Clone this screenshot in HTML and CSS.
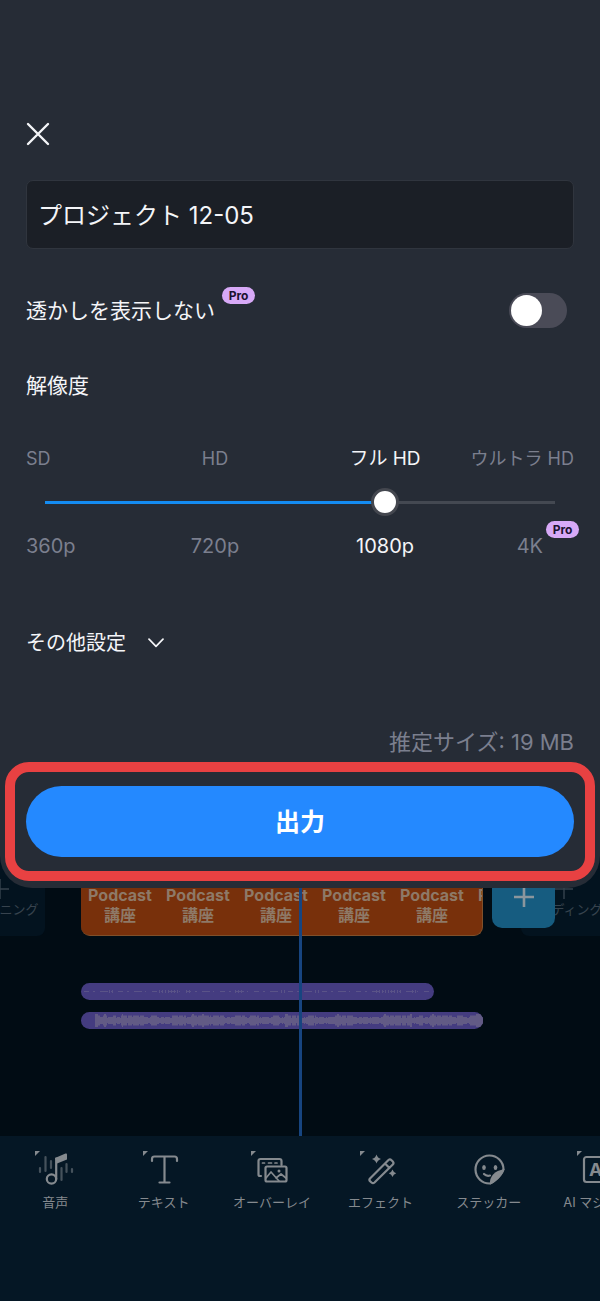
FILE: index.html
```html
<!DOCTYPE html>
<html lang="ja">
<head>
<meta charset="utf-8">
<meta name="viewport" content="width=device-width, initial-scale=1">
<title>プロジェクトの出力</title>
<link rel="stylesheet" href="styles.css">
</head>
<body>
<main class="sheet">
  <button class="close" type="button" aria-label="閉じる">
    <svg width="24" height="24" viewBox="0 0 24 24" fill="none" stroke="#f4f5f8" stroke-width="2.4" stroke-linecap="round"><path d="M2 2 22 22M22 2 2 22"/></svg>
  </button>
  <input class="project-name" type="text" aria-label="プロジェクト名" value="プロジェクト 12-05">

  <div class="option-row">
    <label class="option-label" for="watermark">透かしを表示しない<span class="badge">Pro</span></label>
    <input class="toggle" type="checkbox" role="switch" id="watermark">
  </div>

  <label class="heading" for="resolution">解像度</label>
  <div class="scale scale-names">
    <span>SD</span><span>HD</span><span class="current">フル HD</span><span>ウルトラ HD</span>
  </div>
  <input class="slider" type="range" id="resolution" min="0" max="3" step="1" value="2">
  <div class="scale scale-values">
    <span>360p</span><span>720p</span><span class="current">1080p</span><span class="ultra">4K<span class="badge">Pro</span></span>
  </div>

  <button class="more" type="button">その他設定
    <svg width="16" height="10" viewBox="0 0 16 10" fill="none" stroke="currentColor" stroke-width="1.7" stroke-linecap="round" stroke-linejoin="round"><path d="M1 1.200 8 8.300 15 1.200"/></svg>
  </button>

  <p class="estimate">推定サイズ: 19 MB</p>
  <div class="callout">
    <button class="export" type="button">出力</button>
  </div>
</main>

<section class="timeline">
  <div class="video-row">
    <div class="edge-clip edge-clip-start">
      <svg width="18" height="22" viewBox="0 0 18 22" fill="none" stroke="currentColor" stroke-width="1.4"><path d="M0 11H18M9 1V21"/></svg>
      <span>オープニング</span>
    </div>
    <div class="video-clip">
      <div class="frame">Podcast<br>講座</div>
      <div class="frame">Podcast<br>講座</div>
      <div class="frame">Podcast<br>講座</div>
      <div class="frame">Podcast<br>講座</div>
      <div class="frame">Podcast<br>講座</div>
      <div class="frame">Podcast<br>講座</div>
    </div>
    <button class="add" type="button" aria-label="クリップを追加">
      <svg width="22" height="22" viewBox="0 0 22 22" fill="none" stroke="currentColor" stroke-width="2.600"><path d="M1 11H21M11 1V21"/></svg>
    </button>
    <div class="edge-clip edge-clip-end">
      <svg width="18" height="22" viewBox="0 0 18 22" fill="none" stroke="currentColor" stroke-width="1.400"><path d="M0 11H18M9 1V21"/></svg>
      <span>エンディング</span>
    </div>
  </div>
  <div class="audio-tracks">
    <div class="audio audio-voice">
      <svg viewBox="0 0 353 17" width="353" height="17" fill="none" stroke="#5a5388">
        <path d="M3 8.500H350" stroke-width="1" stroke-dasharray="5 4 2 5 8 3 1 6"/>
        <path d="M28 8.500h6M78 8.500h19M105 8.500h4M154 8.500h7M200 8.500h5M234 8.500h6M295 8.500h25M331 8.500h5" stroke-width="3" stroke-dasharray="1 2"/>
      </svg>
    </div>
    <div class="audio audio-music">
      <svg viewBox="0 0 402 17" width="402" height="17" fill="none" stroke="#625b85">
        <path d="M14 8.500H402" stroke-width="5"/>
        <path d="M14 8.500H402" stroke-width="7" stroke-dasharray="3 1 5 2 1 1 7 2"/>
        <path d="M14 8.500h5M22 8.500h4M32 8.500h3M40 8.500h24M70 8.500h7M91 8.500h14M110 8.500h20M132 8.500h11M154 8.500h10M169 8.500h9M192 8.500h6M204 8.500h16M227 8.500h8M254 8.500h19M302 8.500h29M338 8.500h4M349 8.500h22M376 8.500h7M389 8.500h13" stroke-width="10" stroke-dasharray="6 1 4 1"/>
        <path d="M14 8.500h3M23 8.500h2M41 8.500h1M111 8.500h2M121 8.500h2M204 8.500h3M256 8.500h2M303 8.500h2M329 8.500h2M351 8.500h2M395 8.500h7" stroke-width="13"/>
      </svg>
    </div>
  </div>
  <div class="playhead"></div>
</section>

<nav class="toolbar">
  <button class="tool" type="button">
    <svg class="tool-icon" viewBox="0 0 48 40">
      <path class="solid" d="M4 1h5L4 6z"/>
      <path class="faint" d="M9 18v4M14.500 7v14M20 11v7M30.500 18v12M35.500 14v8M41 19v3"/>
      <circle cx="20.500" cy="29" r="4.700"/><path d="M25.200 29V8.500"/>
      <path class="solid" d="M24 8 34.500 3.500q1.500-.5 1.500 1v5L26 13.500z"/>
    </svg>
    <span>音声</span>
  </button>
  <button class="tool" type="button">
    <svg class="tool-icon" viewBox="0 0 48 40">
      <path class="solid" d="M3 1h5L3 6z"/>
      <path d="M12 11V9q0-2.500 2.500-2.500h20Q37 6.500 37 9v2M24.500 7v25M19.500 32.500h10"/>
    </svg>
    <span>テキスト</span>
  </button>
  <button class="tool" type="button">
    <svg class="tool-icon" viewBox="0 0 48 40">
      <path class="solid" d="M3 1h5L3 6z"/>
      <path d="M13 26h-1q-1.500 0-1.500-1.500V11q0-2 2-2h19q2 0 2 2v4"/>
      <path class="thin" d="M14.500 13h2M20.500 13h3M27 13h2"/>
      <rect x="17.500" y="16.500" width="21" height="15" rx="1.500"/>
      <path class="thin" d="M18 28l5-6 8 9M28 28l5-4 5 4"/><circle class="solid" cx="31" cy="21" r="1.500"/>
    </svg>
    <span>オーバーレイ</span>
  </button>
  <button class="tool" type="button">
    <svg class="tool-icon" viewBox="0 0 48 40">
      <path class="solid" d="M4 1h5L4 6z"/>
      <path d="M14 28.500 32.500 10q1.500-1.300 3 .2l1.300 1.300q1.400 1.500 0 3L18.500 32.500q-1.500 1.300-3 0L14 31.200q-1.200-1.300 0-2.700zM29 13.500l4.500 4.500"/>
      <path class="solid" d="M20.500 4.500q1 3.500 4.500 4.500-3.500 1-4.500 4.500-1-3.500-4.500-4.500 3.500-1 4.500-4.500zM36.500 19.500q.8 2.700 3.700 3.700-2.900 1-3.700 3.700-.8-2.700-3.700-3.700 2.900-1 3.700-3.700z"/>
    </svg>
    <span>エフェクト</span>
  </button>
  <button class="tool" type="button">
    <svg class="tool-icon" viewBox="0 0 48 40">
      <path d="M25 33.500A14 14 0 1 1 38.500 19.500Q34 29 25 33.500z"/>
      <path class="solid" d="M25 34.500Q24 22 39.500 19 38.500 24 33 29T25 34.500z"/>
      <ellipse class="solid" cx="19" cy="17.500" rx="1.800" ry="2.600"/><ellipse class="solid" cx="30.500" cy="17.500" rx="1.800" ry="2.600"/>
      <path d="M19 24q2.500 2.500 6 1.500"/>
    </svg>
    <span>ステッカー</span>
  </button>
  <button class="tool" type="button">
    <svg class="tool-icon" viewBox="0 0 48 40">
      <path class="solid" d="M4 1h5L4 6z"/>
      <rect x="11" y="7" width="28" height="25" rx="2.500"/>
      <text class="icon-text" x="16" y="26">AI</text>
    </svg>
    <span>AI マジック</span>
  </button>
</nav>
</body>
</html>
```
FILE: styles.css
```css
* { box-sizing: border-box; }

body {
  margin: 0;
  min-height: 100vh;
  display: flex;
  flex-direction: column;
  overflow-x: hidden;
  background: #010c14;
  color: #f4f5f8;
  font-family: Inter, "Noto Sans CJK JP", sans-serif;
}

button {
  padding: 0;
  border: 0;
  background: none;
  color: inherit;
  font: inherit;
}

/* Export sheet */
.sheet {
  position: relative;
  z-index: 2;
  display: flex;
  flex-direction: column;
  padding: 122px 26px 7px;
  border-radius: 0 0 32px 32px;
  background: #262c36;
}

.close {
  align-self: flex-start;
  height: 24px;
}

.close svg { display: block; }

.project-name {
  width: 100%;
  height: 69px;
  margin-top: 34px;
  padding: 0 11px 3px;
  border: 1px solid #30353e;
  border-radius: 7px;
  background: #1b1f26;
  color: #f4f5f8;
  font: 24px Inter, "Noto Sans CJK JP", sans-serif;
}

.option-row {
  display: flex;
  align-items: center;
  justify-content: space-between;
  height: 36px;
  margin-top: 43px;
  padding-right: 7px;
}

.option-label,
.ultra { position: relative; }

.option-label {
  padding: 1px 7px 0 0;
  font-size: 21px;
  line-height: 32px;
}

.badge {
  position: absolute;
  left: 100%;
  top: -7px;
  width: 33px;
  border-radius: 9px;
  background: #d7a9f7;
  color: #1c1230;
  font-size: 12px;
  font-weight: 700;
  line-height: 17px;
  text-align: center;
}

.toggle {
  appearance: none;
  width: 58px;
  height: 35px;
  margin: 0;
  padding: 2px;
  border-radius: 18px;
  background: #4a4b57;
}

.toggle::before {
  content: "";
  display: block;
  width: 31px;
  height: 31px;
  border-radius: 50%;
  background: #fff;
}

.toggle:checked::before { margin-left: auto; }

.heading {
  margin-top: 42px;
  font-size: 21px;
  line-height: 32px;
}

.scale {
  display: grid;
  grid-template-columns: 104fr 170fr 170fr 104fr;
  color: #7b7f8e;
  line-height: 28px;
  text-align: center;
  white-space: nowrap;
}

.scale > :first-child { text-align: left; }
.scale > :last-child { justify-self: end; }
.scale .current { color: #f4f5f8; }

.scale-names {
  margin-top: 43px;
  font-size: 18px;
}

.scale-names .current { font-size: 19px; }

.scale-values {
  margin-top: 16px;
  font-size: 20px;
}

.ultra {
  margin-right: 28px;
  padding-right: 3px;
}

.ultra .badge { top: -11px; }

.slider {
  appearance: none;
  height: 28px;
  margin: 15px 5px 0;
  background: linear-gradient(90deg, #148cf2 66.67%, #444952 66.67%) center / calc(100% - 28px) 3px no-repeat;
}

.slider::-webkit-slider-thumb {
  appearance: none;
  width: 28px;
  height: 28px;
  border: 3px solid #44474f;
  border-radius: 50%;
  background: #fff;
}

.more {
  display: flex;
  align-items: center;
  align-self: flex-start;
  gap: 22px;
  margin-top: 67px;
  font-size: 20px;
  line-height: 32px;
}

.estimate {
  margin: 68px 0 5px;
  color: #7b7f8e;
  font-size: 22px;
  line-height: 30px;
  text-align: right;
}

.callout {
  margin: 0 -21px;
  padding: 14px 11px;
  border: 10px solid #e84142;
  border-radius: 24px;
}

.export {
  display: block;
  width: 100%;
  height: 71px;
  padding-bottom: 4px;
  border-radius: 36px;
  background: #2489ff;
  color: #fff;
  font-size: 25px;
  font-weight: 700;
}

/* Timeline, dimmed behind the sheet */
.timeline {
  position: relative;
  margin-top: -32px;
  padding-bottom: 107px;
  overflow: hidden;
}

.video-row {
  display: flex;
  margin-left: -41px;
}

.edge-clip {
  display: flex;
  flex: 0 0 86px;
  flex-direction: column;
  align-items: center;
  height: 80px;
  padding-top: 22px;
  border-radius: 8px;
  background: #03131f;
  color: #37434e;
  font-size: 13px;
  line-height: 18px;
  white-space: nowrap;
}

.edge-clip-start { padding-right: 4px; }
.edge-clip-end { margin-left: -34px; }

.video-clip {
  display: flex;
  flex: 0 0 402px;
  height: 80px;
  margin: 0 9px 0 36px;
  overflow: hidden;
  border: solid #80502a;
  border-width: 0 1px 1px 0;
  border-radius: 9px;
  background: #78300b;
}

.frame {
  flex: 0 0 78px;
  padding-top: 29px;
  color: #8e7967;
  font-size: 16px;
  font-weight: 700;
  line-height: 20px;
  text-align: center;
}

.add {
  position: relative;
  z-index: 1;
  flex: 0 0 63px;
  height: 72px;
  padding-top: 14px;
  border-radius: 10px;
  background: #165c80;
  color: #8b969d;
}

.audio-tracks {
  display: grid;
  gap: 12px;
  margin: 47px 0 0 81px;
}

.audio {
  height: 17px;
  overflow: hidden;
  border-radius: 9px;
  background: #443c80;
}

.audio svg { display: block; }
.audio-voice { width: 353px; }
.audio-music { width: 402px; }

.playhead {
  position: absolute;
  top: 0;
  bottom: 0;
  left: 50%;
  width: 3px;
  margin-left: -1px;
  background: #174580;
}

/* Bottom tools */
.toolbar {
  display: flex;
  flex: 1;
  align-items: flex-start;
  min-height: 165px;
  padding: 14px 0 0 1px;
  overflow: hidden;
  background: #051725;
  color: #858a8f;
}

.tool {
  display: flex;
  flex: 0 0 18.1%;
  flex-direction: column;
  align-items: center;
  gap: 3px;
  font-size: 13px;
  line-height: 18px;
  white-space: nowrap;
}

.tool-icon {
  width: 48px;
  height: 40px;
  fill: none;
  stroke: currentColor;
  stroke-width: 2.2;
  stroke-linecap: round;
  stroke-linejoin: round;
}

.tool-icon .solid { fill: currentColor; stroke: none; }
.tool-icon .thin { stroke-width: 1.7; }
.tool-icon .faint { stroke: #46525c; }

.tool-icon .icon-text {
  fill: currentColor;
  stroke: none;
  font-size: 18px;
  font-weight: 700;
}
```
